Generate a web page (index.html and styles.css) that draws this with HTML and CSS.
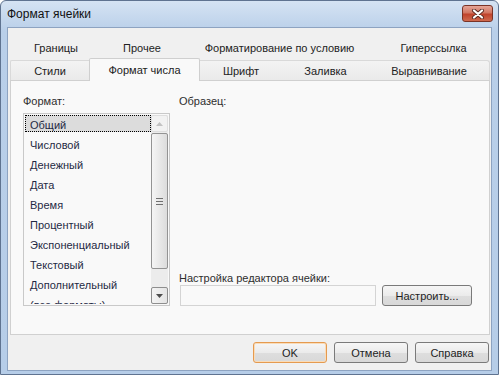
FILE: index.html
```html
<!DOCTYPE html>
<html lang="ru">
<head>
  <meta charset="UTF-8" />
  <title>Формат ячейки</title>
  <link rel="stylesheet" href="styles.css">
</head>
<body>
  <div class="window">
    <div class="titlebar">
      <span class="title">Формат ячейки</span>
      <div class="close-btn">
        <svg width="14" height="10" viewBox="0 0 14 10">
          <path d="M3 1.5 L11 8.5 M11 1.5 L3 8.5" stroke="#5a2a22" stroke-width="4" stroke-linecap="round"/>
          <path d="M3 1.5 L11 8.5 M11 1.5 L3 8.5" stroke="#fff" stroke-width="2.2" stroke-linecap="round"/>
        </svg>
      </div>
    </div>

    <div class="client">
      <div class="tabs-back">
        <div class="tab-back w1">Границы</div>
        <div class="tab-back w2">Прочее</div>
        <div class="tab-back w3">Форматирование по условию</div>
        <div class="tab-back w4">Гиперссылка</div>
      </div>
      <div class="tabs-front">
        <div class="tab first t1">Стили</div>
        <div class="tab active t2">Формат числа</div>
        <div class="tab t3">Шрифт</div>
        <div class="tab t4">Заливка</div>
        <div class="tab last t5">Выравнивание</div>
      </div>

      <div class="panel">
        <div class="col-left">
          <div class="label">Формат:</div>
          <div class="listbox">
            <div class="items">
              <div class="item selected">Общий</div>
              <div class="item">Числовой</div>
              <div class="item">Денежный</div>
              <div class="item">Дата</div>
              <div class="item">Время</div>
              <div class="item">Процентный</div>
              <div class="item">Экспоненциальный</div>
              <div class="item">Текстовый</div>
              <div class="item">Дополнительный</div>
              <div class="item">(все форматы)</div>
            </div>
            <div class="scrollbar">
              <div class="sb-arrow up">
                <svg width="7" height="4" viewBox="0 0 7 4"><path d="M0 4 L3.5 0 L7 4 Z" fill="#c2c2c2"/></svg>
              </div>
              <div class="sb-thumb">
                <span class="grip"></span>
                <span class="grip"></span>
                <span class="grip"></span>
              </div>
              <div class="sb-track"></div>
              <div class="sb-arrow down">
                <svg width="7" height="4" viewBox="0 0 7 4"><path d="M0 0 L7 0 L3.5 4 Z" fill="#4d4d4d"/></svg>
              </div>
            </div>
          </div>
        </div>

        <div class="col-right">
          <div class="label">Образец:</div>
          <div class="editor">
            <div class="label">Настройка редактора ячейки:</div>
            <div class="editor-row">
              <div class="textbox"></div>
              <button class="btn setup">Настроить...</button>
            </div>
          </div>
        </div>
      </div>

      <div class="footer">
        <button class="btn default">OK</button>
        <button class="btn">Отмена</button>
        <button class="btn">Справка</button>
      </div>
    </div>
  </div>
</body>
</html>
```

FILE: styles.css
```css
body {
  margin: 0;
  font-family: 'Liberation Sans', Arial, sans-serif;
  font-size: 11px;
  color: #222;
  background: #fff;
}

.window {
  width: 499px;
  height: 375px;
  box-sizing: border-box;
  border: 1px solid #5f7390;
  border-radius: 6px 6px 0 0;
  background: linear-gradient(#d5e3f3, #b9cfe9 30px, #b6cde8);
  padding: 0 6px 3px;
  display: flex;
  flex-direction: column;
}

.titlebar {
  height: 26px;
  display: flex;
  align-items: flex-start;
  justify-content: space-between;
}

.title {
  margin-top: 6px;
  font-size: 12px;
  color: #111;
}

.close-btn {
  margin-top: 4px;
  margin-right: -1px;
  width: 29px;
  height: 15px;
  border: 1px solid #7a3326;
  border-radius: 3px;
  background: linear-gradient(#e5a597, #d27662 45%, #c0432c 55%, #cf6a4f);
  display: flex;
  align-items: center;
  justify-content: center;
}

.client {
  flex: 1;
  background: #f0f0f0;
  border: 1px solid #8da3c1;
  padding: 8px 1px 0 2px;
  display: flex;
  flex-direction: column;
}

/* tabs */
.tabs-back {
  display: flex;
  height: 22px;
}

.tab-back {
  display: flex;
  align-items: center;
  justify-content: center;
  padding-top: 1px;
}

.w1 { width: 92px; }
.w2 { width: 80px; }
.w3 { width: 195px; }
.w4 { width: 113px; }

.tabs-front {
  display: flex;
  align-items: flex-end;
  height: 22px;
}

.tab {
  height: 20px;
  box-sizing: border-box;
  border-top: 1px solid #d9d9d9;
  background: linear-gradient(#f3f3f3, #eaeaea);
  display: flex;
  align-items: center;
  justify-content: center;
  padding-top: 1px;
}

.tab.first {
  border-left: 1px solid #d9d9d9;
  border-top-left-radius: 2px;
}

.tab.last {
  border-right: 1px solid #d9d9d9;
  border-top-right-radius: 3px;
}

.tab.active {
  height: 23px;
  margin-bottom: -1px;
  background: #f9f9f9;
  border: 1px solid #cfcfcf;
  border-bottom: none;
  border-radius: 2px 2px 0 0;
  position: relative;
  z-index: 1;
  padding-top: 0;
}

.t1 { width: 79px; }
.t2 { width: 111px; }
.t3 { width: 82px; }
.t4 { width: 87px; }
.t5 { width: 121px; }

.panel {
  height: 255px;
  box-sizing: border-box;
  width: 480px;
  border: 1px solid #d0d0d0;
  background: #f9f9f9;
  padding: 13px 0 0 12px;
  display: flex;
  gap: 9px;
}

.label {
  height: 14px;
  line-height: 14px;
  color: #2e2e2e;
}

/* list */
.col-left {
  display: flex;
  flex-direction: column;
  gap: 5px;
}

.listbox {
  width: 147px;
  height: 193px;
  box-sizing: border-box;
  border: 1px solid #c9c9c9;
  background: #f9f9f9;
  display: flex;
  padding: 1px;
  overflow: hidden;
}

.items {
  flex: 1;
  overflow: hidden;
}

.item {
  height: 17px;
  margin-bottom: 3px;
  line-height: 20px;
  padding-left: 5px;
  white-space: nowrap;
  color: #1f2a44;
}

.item.selected {
  background: #dcdcdc;
  outline: 1px dotted #000;
  outline-offset: -1px;
}

.scrollbar {
  width: 17px;
  display: flex;
  flex-direction: column;
  background: #ececec;
}

.sb-arrow {
  height: 17px;
  box-sizing: border-box;
  border-radius: 2px;
  display: flex;
  align-items: center;
  justify-content: center;
}

.sb-arrow.up {
  border: 1px solid #dedede;
  background: #f2f2f2;
}

.sb-arrow.down {
  border: 1px solid #8e8e8e;
  background: linear-gradient(90deg, #f4f4f4, #e4e4e4);
}

.sb-thumb {
  height: 136px;
  box-sizing: border-box;
  margin: 1px 0;
  border: 1px solid #939393;
  border-radius: 2px;
  background: linear-gradient(90deg, #f5f5f5, #e6e6e6 60%, #dcdcdc);
  display: flex;
  flex-direction: column;
  align-items: center;
  justify-content: center;
  gap: 2px;
}

.grip {
  width: 7px;
  height: 1px;
  background: #6f6f6f;
}

.sb-track {
  flex: 1;
}

/* right column */
.col-right {
  flex: 1;
  display: flex;
  flex-direction: column;
  justify-content: space-between;
  padding-bottom: 28px;
}

.editor-row {
  display: flex;
  gap: 6px;
}

.textbox {
  width: 196px;
  height: 21px;
  box-sizing: border-box;
  margin-left: 1px;
  border: 1px solid #d4d4d4;
  background: #f9f9f9;
}

.btn {
  font-family: 'Liberation Sans', Arial, sans-serif;
  font-size: 11px;
  color: #1e1e1e;
  height: 21px;
  box-sizing: border-box;
  border: 1px solid #7a7a7a;
  border-radius: 3px;
  background: linear-gradient(#f6f6f6, #ebebeb 50%, #dedede 51%, #d8d8d8);
  padding: 0;
}

.btn.setup {
  width: 90px;
}

.footer {
  margin-top: 7px;
  margin-right: 1px;
  display: flex;
  justify-content: flex-end;
  gap: 7px;
}

.footer .btn {
  width: 74px;
}

.btn.default {
  border-color: #e59a4f;
  box-shadow: inset 0 0 0 1px #f9dcb9;
}
```
